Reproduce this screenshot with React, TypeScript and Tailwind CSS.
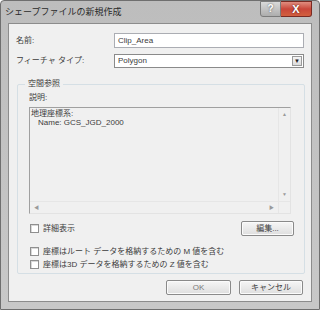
const font = { fontFamily: '"Liberation Sans", "Noto Sans CJK JP", sans-serif' }

function Check({ label }: { label: string }) {
  return (
    <div className="flex items-center gap-[4px]">
      <span className="w-[9px] h-[9px] border border-[#8f8f8f] bg-white shadow-[inset_1px_1px_0_#d8d8d8]" />
      <span>{label}</span>
    </div>
  )
}

function Btn({ label, className }: { label: string; className: string }) {
  return (
    <div
      className={`h-[15px] flex items-center justify-center border border-[#8a8a8a] rounded-[2px] bg-gradient-to-b from-[#f6f6f6] to-[#dedede] shadow-[inset_0_0_0_1px_#fbfbfb] ${className}`}
    >
      {label}
    </div>
  )
}

export default function App() {
  return (
    <div
      className="w-[320px] h-[310px] flex flex-col bg-gradient-to-b from-[#bdbdbd] to-[#c8c8c8] border border-[#6f6f6f] rounded-t-[4px] text-[8px] text-[#3c3c3c] leading-none"
      style={font}
    >
      <div className="h-[22px] flex items-start">
        <span className="pl-[4px] pt-[7px] text-[9px] text-[#2a2a2a] flex-1">シェープファイルの新規作成</span>
        <div className="flex mr-[7px]">
          <div className="w-[21px] h-[16px] rounded-bl-[3px] border border-[#7b7b7b] bg-gradient-to-b from-[#dadada] to-[#adadad] flex items-center justify-center text-[10px] font-bold text-white [text-shadow:0_0_2px_#444]">
            ?
          </div>
          <div className="w-[31px] h-[16px] rounded-br-[3px] border border-l-0 border-[#7a2a22] bg-gradient-to-b from-[#e08d80] via-[#c9463a] to-[#d2603f] flex items-center justify-center text-[11px] font-black text-white [text-shadow:0_0_2px_#4a1510]">
            X
          </div>
        </div>
      </div>
      <div className="mx-[7px] mb-[7px] flex-1 bg-[#f0f0f0] border border-[#8c8c8c] flex flex-col px-[7px] pt-[9px]">
        <div className="flex items-center h-[15px]">
          <span className="w-[98px]">名前:</span>
          <div className="w-[190px] h-[15px] border border-[#abadb3] bg-white flex items-center pl-[3px]">Clip_Area</div>
        </div>
        <div className="flex items-center h-[14px] mt-[6px]">
          <span className="w-[98px]">フィーチャ タイプ:</span>
          <div className="w-[190px] h-[14px] border border-[#8a8a8a] bg-white flex items-center pl-[3px]">
            <span className="flex-1">Polygon</span>
            <span className="w-[10px] h-[10px] mr-[1px] border border-[#9a9a9a] bg-gradient-to-b from-[#f4f4f4] to-[#dcdcdc] flex items-center justify-center text-[6px] text-[#222]">
              ▼
            </span>
          </div>
        </div>
        <div className="relative mt-[16px] ml-[1px] w-[288px] h-[190px] border border-[#d5dfe5] rounded-[2px] px-[11px] pt-[9px] flex flex-col">
          <span className="absolute -top-[5px] left-[7px] px-[3px] bg-[#f0f0f0]">空間参照</span>
          <span>説明:</span>
          <div className="mt-[5px] w-[262px] h-[107px] border border-[#a0a0a0] border-b-[#e3e3e3] border-r-[#e3e3e3] bg-[#f0f0f0] flex flex-col">
            <div className="flex flex-1">
              <div className="flex-1 pl-[1px] pt-[2px] flex flex-col gap-[1px]">
                <span>地理座標系:</span>
                <span className="pl-[7px]">Name: GCS_JGD_2000</span>
              </div>
              <div className="w-[12px] flex flex-col items-center justify-between py-[4px] text-[5px] text-[#9a9a9a] border-l border-[#e6e6e6]">
                <span>▲</span>
                <span>▼</span>
              </div>
            </div>
            <div className="h-[12px] flex border-t border-[#e6e6e6]">
              <div className="flex-1 flex items-center justify-between px-[4px] text-[5px] text-[#9a9a9a]">
                <span>◀</span>
                <span>▶</span>
              </div>
              <div className="w-[12px] border-l border-[#e6e6e6]" />
            </div>
          </div>
          <div className="flex items-center justify-between mt-[7px] pl-[1px]">
            <Check label="詳細表示" />
            <Btn label="編集..." className="w-[53px] -mr-[1px]" />
          </div>
          <div className="mt-[11px] pl-[1px] flex flex-col gap-[4px]">
            <Check label="座標はルート データを格納するための M 値を含む" />
            <Check label="座標は3D データを格納するための Z 値を含む" />
          </div>
        </div>
        <div className="flex justify-end gap-[8px] mt-[6px] pr-[1px]">
          <Btn label="OK" className="w-[65px] text-[#7a7a7a]" />
          <Btn label="キャンセル" className="w-[64px]" />
        </div>
      </div>
    </div>
  )
}
